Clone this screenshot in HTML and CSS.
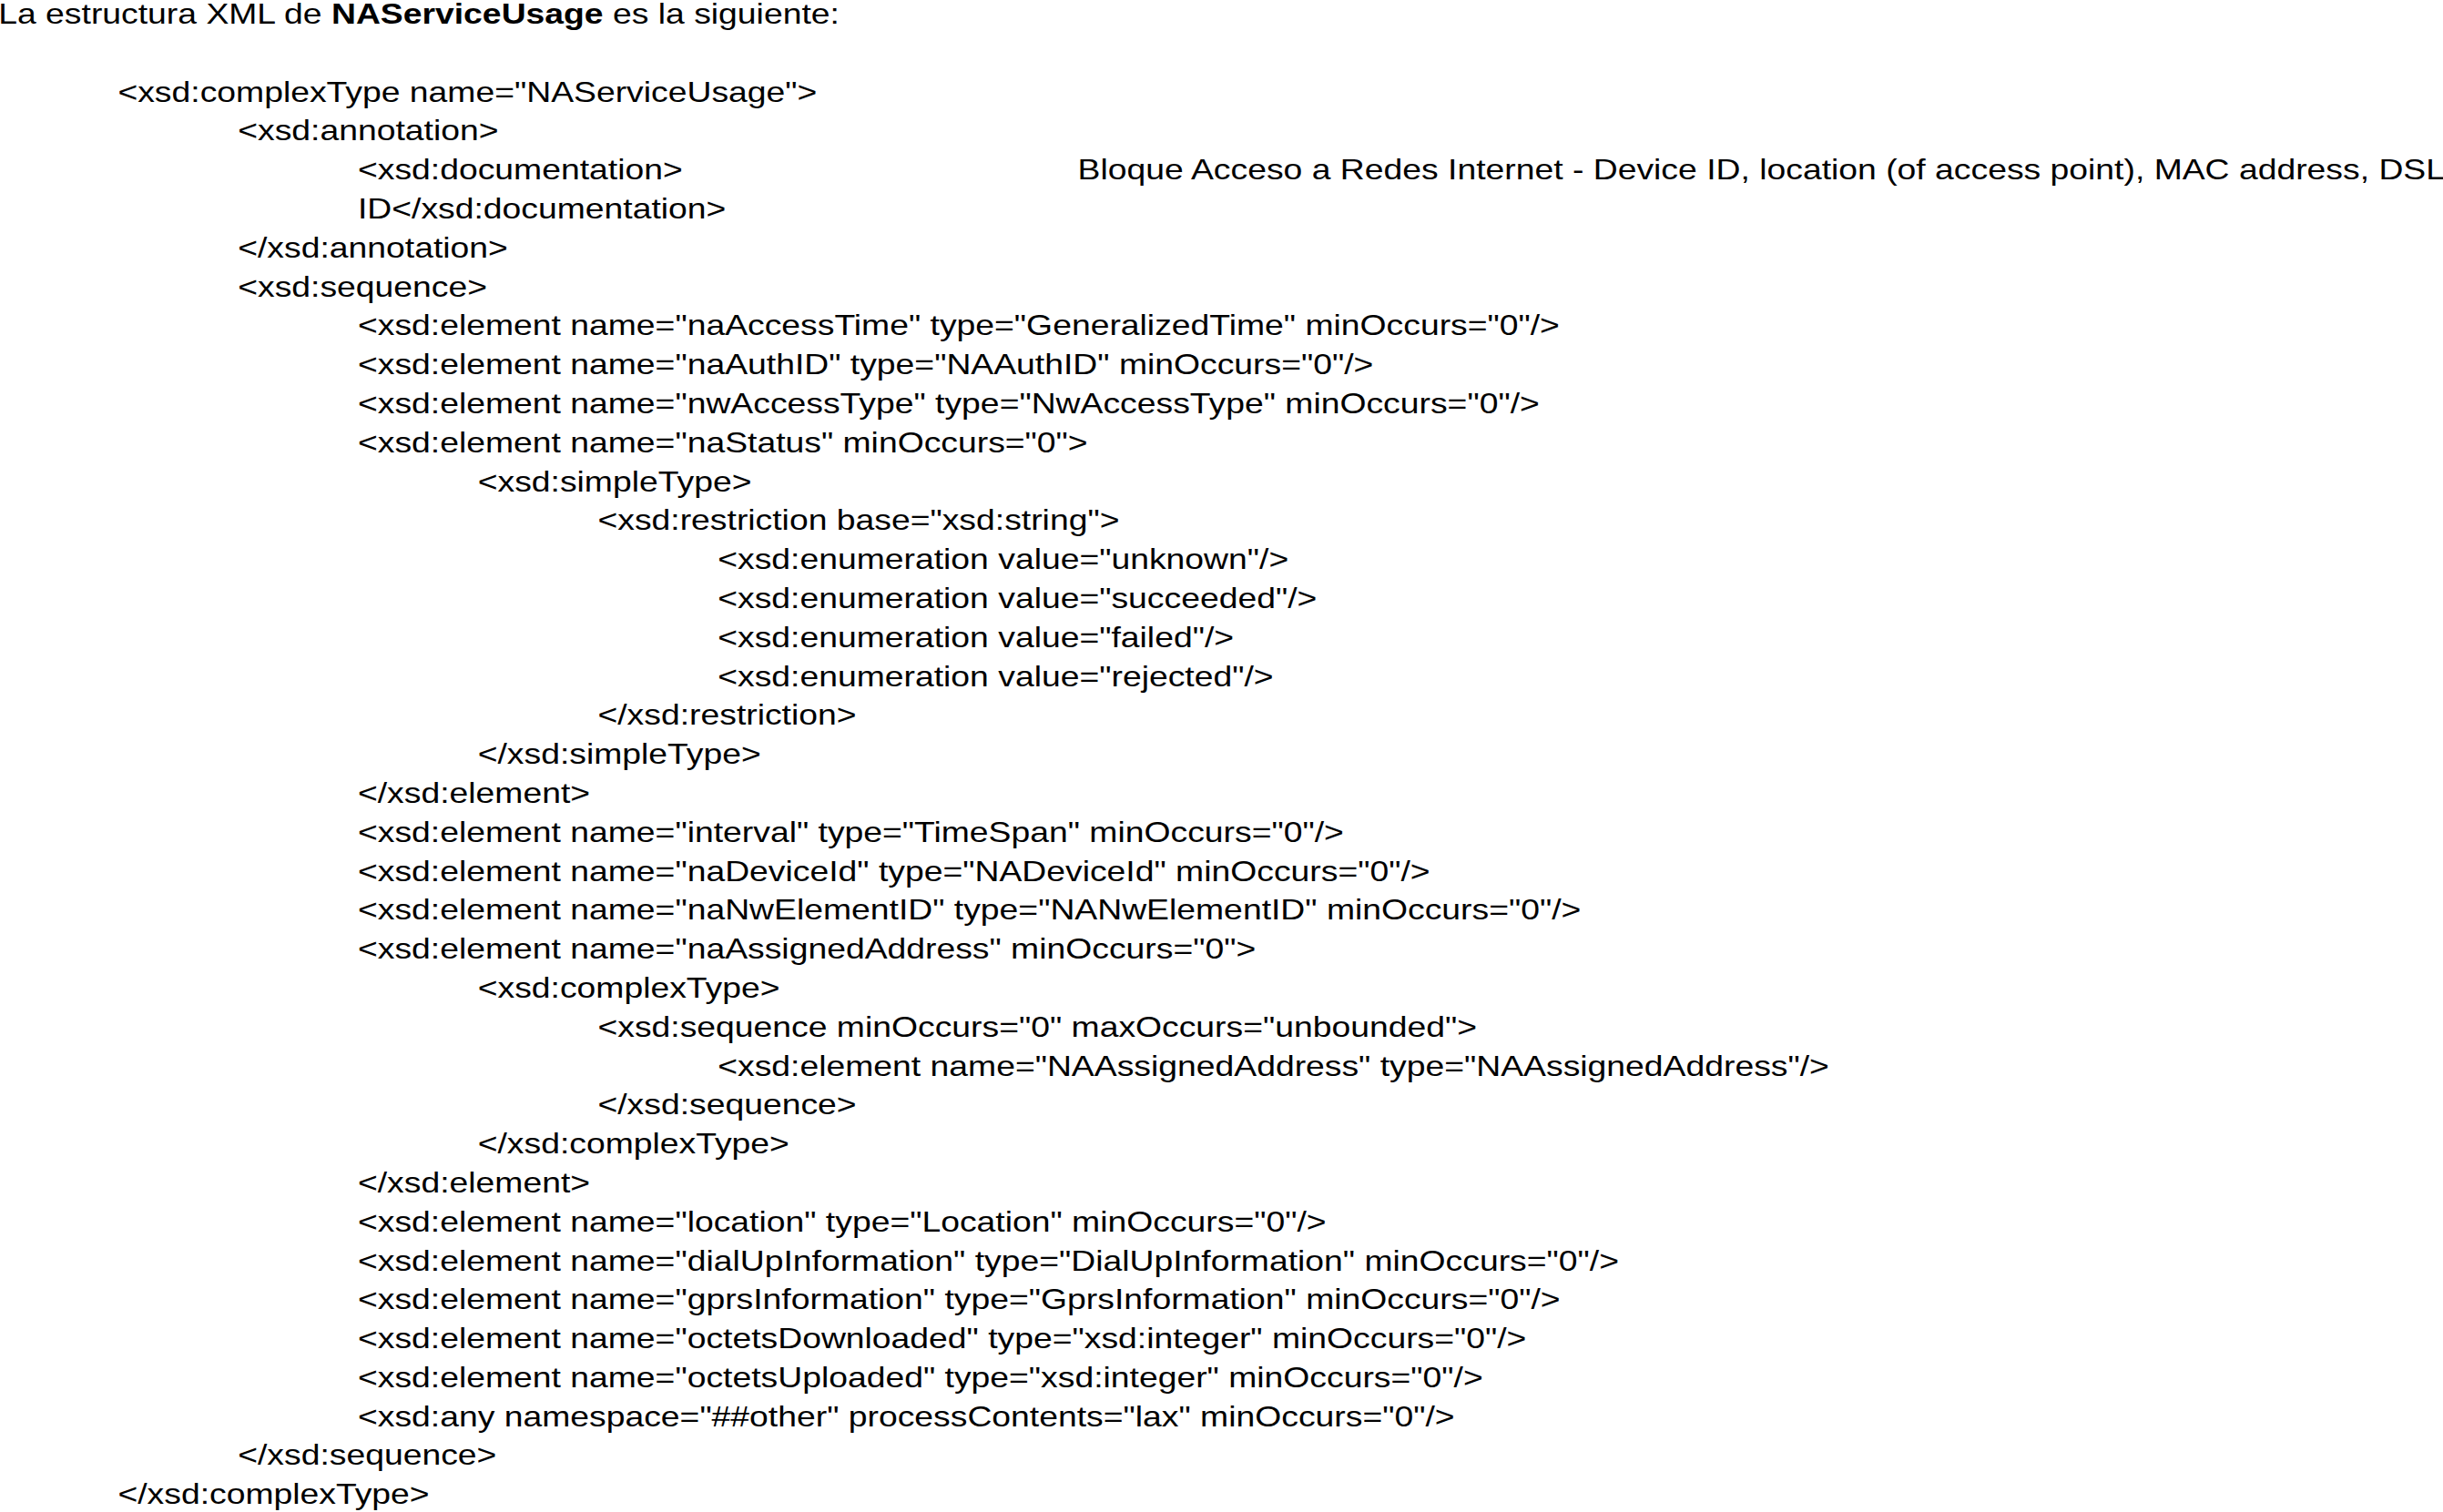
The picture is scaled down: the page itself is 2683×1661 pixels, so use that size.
FILE: index.html
```html
<!DOCTYPE html>
<html lang="es">
<head>
<meta charset="utf-8">
<title>NAServiceUsage</title>
<link rel="stylesheet" href="styles.css">
</head>
<body>
<div class="doc">
  <p class="intro">La estructura XML de <b>NAServiceUsage</b> es la siguiente:</p>
  <div class="xml">
    <div class="ln l1">&lt;xsd:complexType name="NAServiceUsage"&gt;</div>
    <div class="ln l2">&lt;xsd:annotation&gt;</div>
    <div class="ln l3 tabbed"><span class="tab">&lt;xsd:documentation&gt;</span><span>Bloque Acceso a Redes Internet - Device ID, location (of access point), MAC address, DSL</span></div>
    <div class="ln l3">ID&lt;/xsd:documentation&gt;</div>
    <div class="ln l2">&lt;/xsd:annotation&gt;</div>
    <div class="ln l2">&lt;xsd:sequence&gt;</div>
    <div class="ln l3">&lt;xsd:element name="naAccessTime" type="GeneralizedTime" minOccurs="0"/&gt;</div>
    <div class="ln l3">&lt;xsd:element name="naAuthID" type="NAAuthID" minOccurs="0"/&gt;</div>
    <div class="ln l3">&lt;xsd:element name="nwAccessType" type="NwAccessType" minOccurs="0"/&gt;</div>
    <div class="ln l3">&lt;xsd:element name="naStatus" minOccurs="0"&gt;</div>
    <div class="ln l4">&lt;xsd:simpleType&gt;</div>
    <div class="ln l5">&lt;xsd:restriction base="xsd:string"&gt;</div>
    <div class="ln l6">&lt;xsd:enumeration value="unknown"/&gt;</div>
    <div class="ln l6">&lt;xsd:enumeration value="succeeded"/&gt;</div>
    <div class="ln l6">&lt;xsd:enumeration value="failed"/&gt;</div>
    <div class="ln l6">&lt;xsd:enumeration value="rejected"/&gt;</div>
    <div class="ln l5">&lt;/xsd:restriction&gt;</div>
    <div class="ln l4">&lt;/xsd:simpleType&gt;</div>
    <div class="ln l3">&lt;/xsd:element&gt;</div>
    <div class="ln l3">&lt;xsd:element name="interval" type="TimeSpan" minOccurs="0"/&gt;</div>
    <div class="ln l3">&lt;xsd:element name="naDeviceId" type="NADeviceId" minOccurs="0"/&gt;</div>
    <div class="ln l3">&lt;xsd:element name="naNwElementID" type="NANwElementID" minOccurs="0"/&gt;</div>
    <div class="ln l3">&lt;xsd:element name="naAssignedAddress" minOccurs="0"&gt;</div>
    <div class="ln l4">&lt;xsd:complexType&gt;</div>
    <div class="ln l5">&lt;xsd:sequence minOccurs="0" maxOccurs="unbounded"&gt;</div>
    <div class="ln l6">&lt;xsd:element name="NAAssignedAddress" type="NAAssignedAddress"/&gt;</div>
    <div class="ln l5">&lt;/xsd:sequence&gt;</div>
    <div class="ln l4">&lt;/xsd:complexType&gt;</div>
    <div class="ln l3">&lt;/xsd:element&gt;</div>
    <div class="ln l3">&lt;xsd:element name="location" type="Location" minOccurs="0"/&gt;</div>
    <div class="ln l3">&lt;xsd:element name="dialUpInformation" type="DialUpInformation" minOccurs="0"/&gt;</div>
    <div class="ln l3">&lt;xsd:element name="gprsInformation" type="GprsInformation" minOccurs="0"/&gt;</div>
    <div class="ln l3">&lt;xsd:element name="octetsDownloaded" type="xsd:integer" minOccurs="0"/&gt;</div>
    <div class="ln l3">&lt;xsd:element name="octetsUploaded" type="xsd:integer" minOccurs="0"/&gt;</div>
    <div class="ln l3">&lt;xsd:any namespace="##other" processContents="lax" minOccurs="0"/&gt;</div>
    <div class="ln l2">&lt;/xsd:sequence&gt;</div>
    <div class="ln l1">&lt;/xsd:complexType&gt;</div>
  </div>
</div>
</body>
</html>
```

FILE: styles.css
```css
html, body {
  margin: 0;
  padding: 0;
  background: #ffffff;
  overflow: hidden;
}

.doc {
  width: 2301px;
  margin-top: -6px;
  font-family: "Liberation Sans", Arial, sans-serif;
  font-size: 32px;
  line-height: 42.8px;
  color: #000000;
  transform: scaleX(1.166);
  transform-origin: 0 0;
}

.intro {
  margin: 0 0 42.8px -1.5px;
  white-space: pre;
}

.intro b {
  font-weight: bold;
}

.ln {
  height: 42.8px;
  white-space: pre;
}

.l1 { padding-left: 111px; }
.l2 { padding-left: 224px; }
.l3 { padding-left: 337px; }
.l4 { padding-left: 450px; }
.l5 { padding-left: 563px; }
.l6 { padding-left: 676px; }

.tabbed {
  display: flex;
}

.tabbed .tab {
  flex: 0 0 678px;
}
```
